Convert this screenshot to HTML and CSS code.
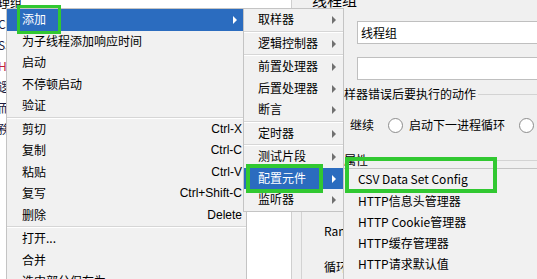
FILE: index.html
```html
<!doctype html><html lang="zh"><head>
<meta charset="utf-8" />
<title>线程组</title>
<link rel="stylesheet" href="styles.css"></head><body>
<div class="window">
	<div class="tree">
		<div class="first">理组</div>
		<div>CSV</div>
		<div>SS</div>
		<div class="red">HTTP</div>
		<div>逻辑</div>
		<div>而</div>
		<div>務</div>
	</div>
	<div class="pane">
		<div class="title">线程组</div>
		<div class="row"><label>名称：</label><div class="field">线程组</div></div>
		<div class="row r2"><label>注释：</label><div class="field"></div></div>
		<fieldset class="g1">
			<legend>在取样器错误后要执行的动作</legend>
			<div class="radios">
				<span class="radio"></span>继续
				<span class="radio"></span>启动下一进程循环
				<span class="radio"></span>停止线程
				<span class="radio"></span>停止测试
			</div>
		</fieldset>
		<fieldset class="g2">
			<legend>线程属性</legend>
			<div class="prop">线程数：</div>
			<div class="prop">Ramp-Up时间（秒）：</div>
			<div class="prop">循环次数 &nbsp;永远</div>
		</fieldset>
	</div>
</div>

<div class="menu m1">
	<div class="item sub active">添加<i class="arrow"></i></div>
	<div class="item">为子线程添加响应时间</div>
	<div class="item">启动</div>
	<div class="item">不停顿启动</div>
	<div class="item">验证</div>
	<div class="sep"></div>
	<div class="item">剪切<span class="key">Ctrl-X</span></div>
	<div class="item">复制<span class="key">Ctrl-C</span></div>
	<div class="item">粘贴<span class="key">Ctrl-V</span></div>
	<div class="item">复写<span class="key">Ctrl+Shift-C</span></div>
	<div class="item">删除<span class="key">Delete</span></div>
	<div class="sep"></div>
	<div class="item">打开...</div>
	<div class="item">合并</div>
	<div class="item">选中部分保存为...</div>
</div>

<div class="menu m2">
	<div class="item">取样器<i class="arrow"></i></div>
	<div class="sep"></div>
	<div class="item">逻辑控制器<i class="arrow"></i></div>
	<div class="sep"></div>
	<div class="item">前置处理器<i class="arrow"></i></div>
	<div class="item">后置处理器<i class="arrow"></i></div>
	<div class="item">断言<i class="arrow"></i></div>
	<div class="sep"></div>
	<div class="item">定时器<i class="arrow"></i></div>
	<div class="sep"></div>
	<div class="item">测试片段<i class="arrow"></i></div>
	<div class="item active">配置元件<i class="arrow"></i></div>
	<div class="item">监听器<i class="arrow"></i></div>
</div>

<div class="menu m3">
	<div class="item">CSV Data Set Config</div>
	<div class="item">HTTP信息头管理器</div>
	<div class="item">HTTP Cookie管理器</div>
	<div class="item">HTTP缓存管理器</div>
	<div class="item">HTTP请求默认值</div>
	<div class="item">JDBC Connection Configuration</div>
</div>

<div class="mark k1"></div>
<div class="mark k2"></div>
<div class="mark k3"></div>
</body></html>
```

FILE: styles.css
```css
body{ margin: 0; width: 537px; height: 279px; overflow: hidden; background: #f0f0f0; color: #000; font: 12px/1.4 "Noto Sans CJK SC", sans-serif }
.window{ display: flex; width: 620px; height: 279px }

/* tree, hidden under the menus */
.tree{ flex: none; width: 291px; background: #fff; overflow: hidden }
.tree div{ height: 21px; line-height: 21px; white-space: nowrap; margin-left: -2px; color: #1a1a40 }
.tree .first{ margin-top: -8px; color: #000 }
.tree .red{ color: #c0203a }

/* thread group panel */
.pane{ flex: 1; min-width: 0; overflow: hidden; border-left: 1px solid #cfcfcf; background: #f0f0f0 }
.title{ font-size: 15px; line-height: 18px; margin: -9px 0 0 20px }
.row{ display: flex; align-items: center; margin-top: 12px; padding-left: 12px }
.row.r2{ margin-top: 13px }
.row label{ flex: none; width: 53px; white-space: nowrap; overflow: hidden }
.field{ flex: 1; height: 21px; line-height: 21px; padding-left: 3px; border: 1px solid #bfbfbf; background: #fff }
fieldset{ margin: 6px 0 0 9px; padding: 13px 0 17px 22px; border: 0; border-top: 1px solid #d3d3d3; border-left: 1px solid #d3d3d3; min-width: 0 }
fieldset.g2{ margin-top: 0; padding-top: 17px }
legend{ margin-left: -6px; padding: 0 2px; line-height: 16px }
.radios{ display: flex; align-items: center; height: 20px; margin-left: 5px; white-space: nowrap }
.radio{ flex: none; width: 13px; height: 13px; border: 1px solid #8c8c8c; border-radius: 50%; background: #fff; margin: 0 6px 0 14px }
.radio:first-child{ margin-left: 0 }
.prop{ height: 20px; line-height: 20px; margin-bottom: 16px; white-space: nowrap }

/* popup menus */
.menu{ position: absolute; background: #f1f1f1; border: 1px solid #c4c4c4 }
.m1{ left: 6px; top: 8px; width: 239px; height: 320px; z-index: 1 }
.m2{ left: 243px; top: 8px; width: 99px; z-index: 2 }
.m3{ left: 343px; top: 168px; width: 260px; height: 160px; z-index: 3 }
.item{ position: relative; display: flex; align-items: center; height: 21.5px; padding: 0 4px 0 15px; white-space: nowrap }
.m2 .item{ padding-left: 14px }
.m3 .item{ height: 21.3px; padding-left: 14px }
.item .key{ margin-left: auto; font-family: "Liberation Sans", sans-serif }
.item.active{ background: #2b6cbf; color: #fff }
.arrow{ position: absolute; right: 9px; top: 7px; border-left: 4px solid #707070; border-top: 4px solid transparent; border-bottom: 4px solid transparent }
.m2 .arrow{ right: 7px }
.active .arrow{ border-left-color: #fff }
.sep{ border-top: 1px solid #d6d6d6; border-bottom: 1px solid #fff }

/* green annotation boxes */
.mark{ position: absolute; border: 4px solid #31c831; z-index: 5 }
.k1{ left: 17px; top: 5px; width: 38px; height: 23px; border-width: 3px }
.k2{ left: 246px; top: 164px; width: 69px; height: 21px }
.k3{ left: 345px; top: 157px; width: 144px; height: 28px }
```
